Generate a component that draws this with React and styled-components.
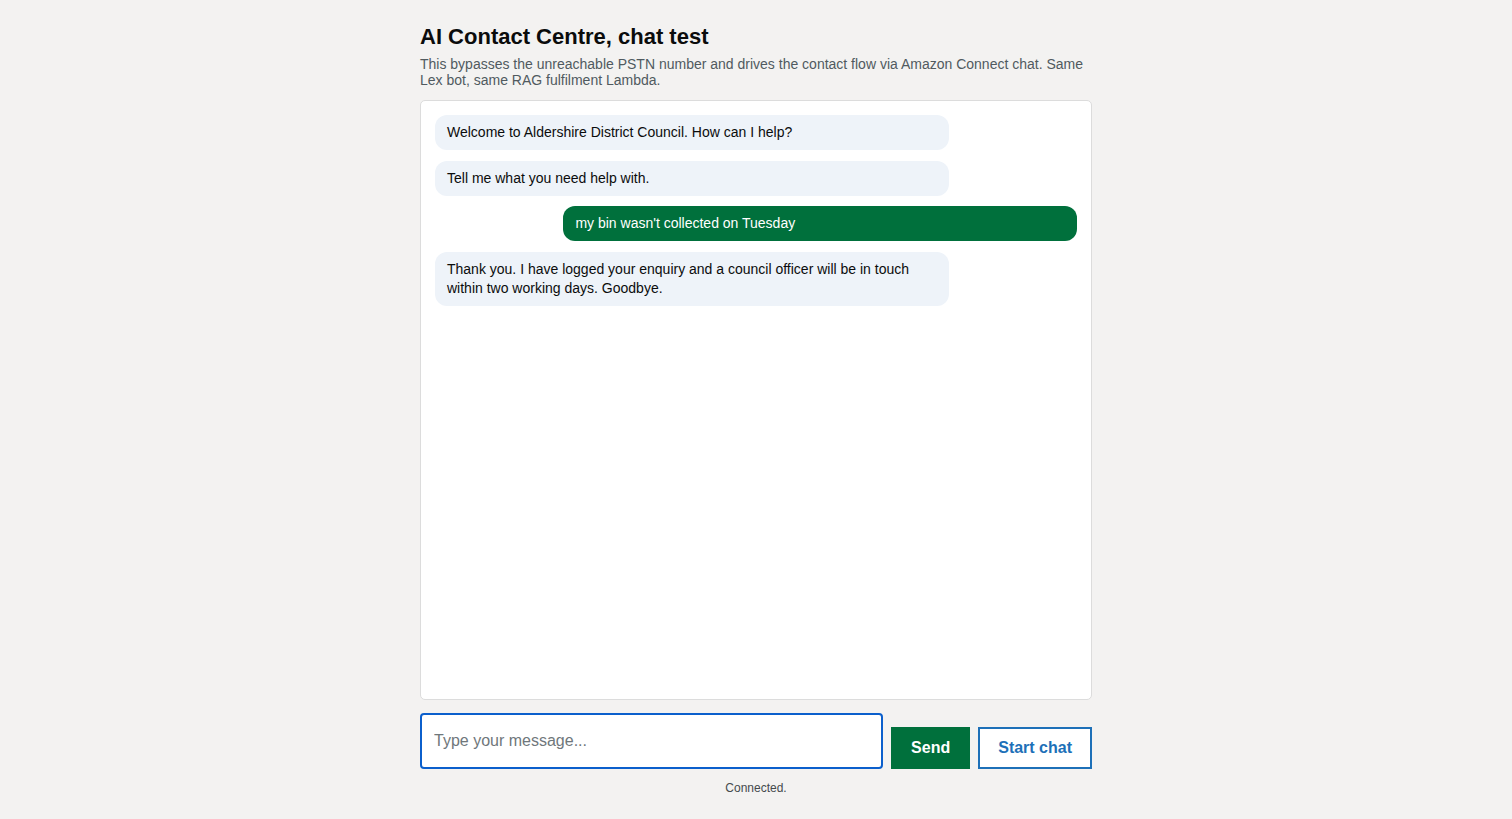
import React from 'react';
import styled, { createGlobalStyle } from 'styled-components';

const GlobalStyle = createGlobalStyle`
  html, body {
    margin: 0;
    background: #f3f2f1;
    font-family: "Liberation Sans", Arial, Helvetica, sans-serif;
    color: #0b0c0c;
  }
`;

const Page = styled.main`
  max-width: 672px;
  margin: 0 auto;
  padding: 24px 0;
`;

const Title = styled.h1`
  margin: 0 0 6px;
  font-size: 22px;
  line-height: 26px;
  font-weight: 700;
`;

const Intro = styled.p`
  margin: 0 0 12px;
  font-size: 14px;
  line-height: 16px;
  color: #505a5f;
`;

const ChatLog = styled.div`
  height: 600px;
  box-sizing: border-box;
  padding: 14px;
  background: #fff;
  border: 1px solid #dcdcdc;
  border-radius: 5px;
  display: flex;
  flex-direction: column;
  gap: 10.5px;
  overflow-y: auto;
`;

const Bubble = styled.div`
  width: 80%;
  box-sizing: border-box;
  padding: 8px 12px;
  border-radius: 12px;
  font-size: 14px;
  line-height: 19px;
  align-self: ${p => (p.$me ? 'flex-end' : 'flex-start')};
  background: ${p => (p.$me ? '#00703c' : '#eef3f9')};
  color: ${p => (p.$me ? '#fff' : '#0b0c0c')};
`;

const Composer = styled.form`
  display: flex;
  align-items: flex-end;
  gap: 8px;
  margin-top: 13px;
`;

const MessageInput = styled.input`
  flex: 1;
  min-width: 0;
  height: 56px;
  box-sizing: border-box;
  padding: 0 12px;
  border: 2px solid #0b5fcc;
  border-radius: 4px;
  background: #fff;
  font-family: inherit;
  font-size: 16px;
  color: #0b0c0c;
  outline: none;

  &::placeholder {
    color: #6f777b;
  }
`;

const Button = styled.button`
  height: 42px;
  box-sizing: border-box;
  padding: 0 18px;
  border: 2px solid ${p => (p.$primary ? '#00703c' : '#1d70b8')};
  border-radius: 0;
  background: ${p => (p.$primary ? '#00703c' : '#fff')};
  color: ${p => (p.$primary ? '#fff' : '#1d70b8')};
  font-family: inherit;
  font-size: 16px;
  font-weight: 700;
  cursor: pointer;
`;

const Status = styled.p`
  margin: 12px 0 0;
  text-align: center;
  font-size: 12px;
  line-height: 14px;
  color: #454a4d;
`;

const messages = [
  { from: 'bot', text: 'Welcome to Aldershire District Council. How can I help?' },
  { from: 'bot', text: 'Tell me what you need help with.' },
  { from: 'me', text: "my bin wasn't collected on Tuesday" },
  {
    from: 'bot',
    text: 'Thank you. I have logged your enquiry and a council officer will be in touch within two working days. Goodbye.',
  },
];

export default function App() {
  return (
    <>
      <GlobalStyle />
      <Page>
        <Title>AI Contact Centre, chat test</Title>
        <Intro>
          This bypasses the unreachable PSTN number and drives the contact flow via Amazon Connect chat. Same
          Lex bot, same RAG fulfilment Lambda.
        </Intro>
        <ChatLog>
          {messages.map((m, i) => (
            <Bubble key={i} $me={m.from === 'me'}>
              {m.text}
            </Bubble>
          ))}
        </ChatLog>
        <Composer onSubmit={e => e.preventDefault()}>
          <MessageInput placeholder="Type your message..." />
          <Button $primary type="submit">Send</Button>
          <Button type="button">Start chat</Button>
        </Composer>
        <Status>Connected.</Status>
      </Page>
    </>
  );
}
